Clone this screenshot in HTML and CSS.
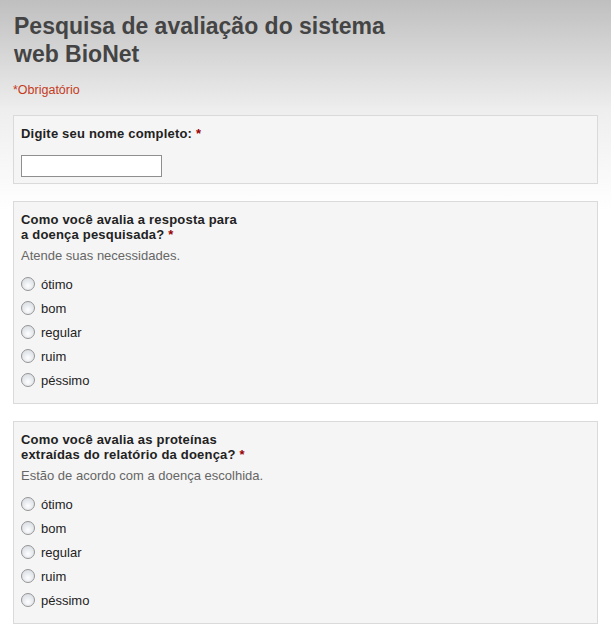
FILE: index.html
```html
<!DOCTYPE html>
<html lang="pt">
<head>
<meta charset="utf-8">
<title>Pesquisa de avaliação do sistema web BioNet</title>
<link rel="stylesheet" href="styles.css">
</head>
<body>
<div class="page">
  <header class="header">
    <h1 class="title">Pesquisa de avaliação do sistema<br>web BioNet</h1>
    <div class="required-note">*Obrigatório</div>
  </header>

  <div class="box box-text">
    <div class="q-title">Digite seu nome completo: <span class="star">*</span></div>
    <input class="text-input" type="text">
  </div>

  <div class="box">
    <div class="q-title">Como você avalia a resposta para<br>a doença pesquisada? <span class="star">*</span></div>
    <div class="q-help">Atende suas necessidades.</div>
    <ul class="options">
      <li class="option"><span class="radio"></span>ótimo</li>
      <li class="option"><span class="radio"></span>bom</li>
      <li class="option"><span class="radio"></span>regular</li>
      <li class="option"><span class="radio"></span>ruim</li>
      <li class="option"><span class="radio"></span>péssimo</li>
    </ul>
  </div>

  <div class="box">
    <div class="q-title">Como você avalia as proteínas<br>extraídas do relatório da doença? <span class="star">*</span></div>
    <div class="q-help">Estão de acordo com a doença escolhida.</div>
    <ul class="options">
      <li class="option"><span class="radio"></span>ótimo</li>
      <li class="option"><span class="radio"></span>bom</li>
      <li class="option"><span class="radio"></span>regular</li>
      <li class="option"><span class="radio"></span>ruim</li>
      <li class="option"><span class="radio"></span>péssimo</li>
    </ul>
  </div>
</div>
</body>
</html>
```

FILE: styles.css
```css
html, body {
  margin: 0;
  padding: 0;
}
body {
  font-family: "Liberation Sans", Arial, sans-serif;
  background: #fff linear-gradient(to bottom, #bfbfbf 0px, #eeeeee 110px, #ffffff 210px) no-repeat;
  background-size: 100% 260px;
  min-height: 639px;
}
.page {
  padding: 12px 0 0 13px;
  width: 585px;
}
.header {
  padding-left: 1px;
}
.title {
  margin: 0;
  font-size: 23px;
  line-height: 28px;
  font-weight: bold;
  color: #444;
}
.required-note {
  margin-top: 15px;
  font-size: 12.5px;
  line-height: 15px;
  color: #c43b1d;
  margin-left: -1px;
}
.box {
  border: 1px solid #dadada;
  background: #f5f5f5;
  padding: 10px 7px 11px;
  margin-top: 17px;
}
.box-text {
  padding-bottom: 6px;
}
.q-title {
  font-size: 13px;
  line-height: 15px;
  font-weight: bold;
  letter-spacing: 0.2px;
  color: #222;
}
.star {
  color: #990000;
}
.text-input {
  display: block;
  margin: 14px 0 0;
  width: 141px;
  height: 22px;
  box-sizing: border-box;
  border: 1px solid #8f8f8f;
  background: #fff;
  padding: 0;
}
.q-help {
  margin-top: 6px;
  font-size: 13px;
  line-height: 15px;
  color: #666;
}
.options {
  list-style: none;
  margin: 9px 0 0;
  padding: 0;
}
.option {
  display: flex;
  align-items: center;
  height: 24px;
  font-size: 13px;
  color: #222;
}
.radio {
  width: 12px;
  height: 12px;
  border: 1px solid #949494;
  border-radius: 50%;
  background: radial-gradient(circle at 50% 65%, #ffffff 0%, #e8ebef 45%, #d3d7dd 100%);
  margin: 0 6px 0 0;
  flex: none;
}
```
